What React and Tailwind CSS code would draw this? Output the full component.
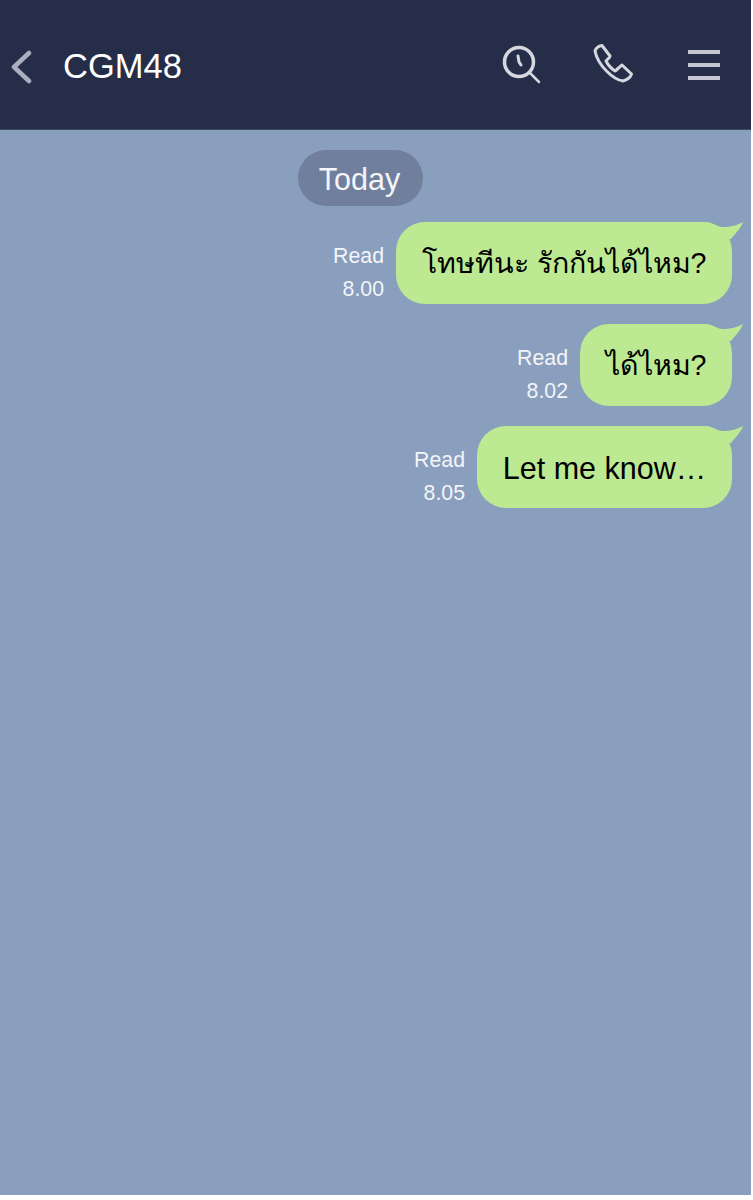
const rows = [
  { text: 'โทษทีนะ รักกันได้ไหม?', time: '8.00', width: 'w-[336px]', size: 'text-[28.6px] pt-[1px]' },
  { text: 'ได้ไหม?', time: '8.02', width: 'w-[152px]', size: 'text-[28.6px] pt-[1px]' },
  { text: 'Let me know…', time: '8.05', width: 'w-[255px]', size: 'text-[30.5px] pt-[4px]' },
]

function Tail() {
  return (
    <svg className="absolute -right-[12px] top-0" width="44" height="20" viewBox="0 0 44 20">
      <path d="M5 0 C12 0 16 5 23 5 C30 5 38 3 43 0 C41 6 35 12 31 17 L5 17 Z" fill="#bde992" />
    </svg>
  )
}

function Message({ text, time, width, size }) {
  return (
    <div className="flex justify-end items-start gap-3 pr-[19px] h-[82px]">
      <div className="pt-[18px] text-right text-[21.3px] leading-[33px] text-[#f3f5f9]">
        <div>Read</div>
        <div>{time}</div>
      </div>
      <div className={`relative ${width} ${size} h-[82px] rounded-[29px] bg-[#bde992] flex items-center justify-center text-black`}>
        <Tail />
        <span className="relative">{text}</span>
      </div>
    </div>
  )
}

export default function App() {
  return (
    <div className="w-[751px] h-[1195px] bg-[#8a9ebd] flex flex-col font-['Liberation_Sans','Noto_Sans','DejaVu_Sans',sans-serif]">
      <header className="h-[130px] bg-[#262d48] flex items-center shrink-0 border-b border-[#3c4763]">
        <svg className="ml-[10px] mt-1" width="22" height="34" viewBox="0 0 22 34" fill="none">
          <path d="M19 3 L4 17 L19 31" stroke="#abaebf" strokeWidth="4.5" strokeLinecap="round" strokeLinejoin="round" />
        </svg>
        <span className="ml-[31px] mt-1 text-[34.5px] text-white leading-none">CGM48</span>
        <div className="ml-auto flex items-center">
          <svg width="42" height="42" viewBox="0 0 42 42" fill="none" stroke="#d6d8e0" strokeLinecap="round" strokeLinejoin="round">
            <circle cx="18" cy="18" r="14.5" strokeWidth="3.5" />
            <path d="M29 29 L38 38" strokeWidth="2.5" />
            <path d="M17 12 L18 18 L20 21" strokeWidth="3" />
          </svg>
          <svg className="ml-[49px]" width="42" height="42" viewBox="0 0 42 42" fill="none" stroke="#d6d8e0" strokeWidth="3" strokeLinejoin="round">
            <path d="M3 7 C4 4 7 2 10 1.5 L18 12 C18 14 15 15 14 17 C16 21 20 25 23 27 C25 26 27 23 30 21 L39.5 30 C39 33 35 36 31 37 C22 36 6 22 3 7 Z" />
          </svg>
          <div className="ml-[54px] mr-[31px] flex flex-col gap-[9px]">
            <div className="w-[32px] h-[4px] bg-[#c4c6d2]" />
            <div className="w-[32px] h-[4px] bg-[#c4c6d2]" />
            <div className="w-[32px] h-[4px] bg-[#c4c6d2]" />
          </div>
        </div>
      </header>
      <main className="flex flex-col pt-5">
        <div className="self-start ml-[298px] w-[125px] h-[56px] pt-[3px] pr-[2px] rounded-full bg-[#707f9c] flex items-center justify-center text-[30.5px] text-[#f3f5f9]">
          Today
        </div>
        <div className="mt-4 flex flex-col gap-5">
          {rows.map((r) => (
            <Message key={r.time} {...r} />
          ))}
        </div>
      </main>
    </div>
  )
}
